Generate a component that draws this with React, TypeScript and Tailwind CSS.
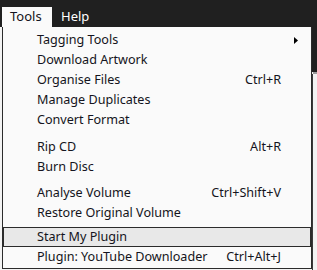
import React from "react";

type Item = { label: string; shortcut?: string; submenu?: boolean; active?: boolean } | { sep: number };

const items: Item[] = [
  { label: "Tagging Tools", submenu: true },
  { label: "Download Artwork" },
  { label: "Organise Files", shortcut: "Ctrl+R" },
  { label: "Manage Duplicates" },
  { label: "Convert Format" },
  { sep: 7 },
  { label: "Rip CD", shortcut: "Alt+R" },
  { label: "Burn Disc" },
  { sep: 6 },
  { label: "Analyse Volume", shortcut: "Ctrl+Shift+V" },
  { label: "Restore Original Volume" },
  { sep: 4 },
  { label: "Start My Plugin", active: true },
  { label: "Plugin: YouTube Downloader", shortcut: "Ctrl+Alt+J" },
];

function MenuRow({ item }: { item: { label: string; shortcut?: string; submenu?: boolean; active?: boolean } }) {
  return (
    <div
      className={
        "flex items-center h-[20px] " +
        (item.active
          ? "bg-[#e8e8e8] border border-[#2b2b2b] pl-[33px] pr-[29px]"
          : "pl-[34px] pr-[30px]")
      }
    >
      <span className="flex-1 whitespace-nowrap">{item.label}</span>
      {item.shortcut && <span className="whitespace-nowrap">{item.shortcut}</span>}
      {item.submenu && (
        <svg width="4" height="7" viewBox="0 0 4 7" className="mr-[-17px] ml-auto">
          <path d="M0 0 L4 3.5 L0 7 Z" fill="#000" />
        </svg>
      )}
    </div>
  );
}

export default function App() {
  return (
    <div
      className="relative flex flex-col w-[317px] h-[270px] overflow-hidden bg-[#f3f3f3] text-[12.6px] text-[#141420]"
      style={{ fontFamily: '"Noto Sans", "Open Sans", sans-serif' }}
    >
      {/* Menu bar */}
      <div className="flex items-end h-[27px] shrink-0 bg-[#202020]">
        <div className="ml-[2px] h-[20px] w-[50px] bg-[#fafafa] pl-[8px] leading-[18px] text-[13px]">
          Tools
        </div>
        <div className="ml-[9px] h-[20px] leading-[18px] text-[13px] text-white">Help</div>
      </div>

      {/* Window content behind the menu */}
      <div className="flex flex-1">
        <div className="flex-1" />
        <div className="flex flex-col w-[6px]">
          <div className="h-[45px] bg-[#202020]" />
          <div className="h-[2px] ml-[2px] bg-[#9a9a9a]" />
          <div className="flex-1 ml-[1px] border-l border-[#3a3a3a]" />
        </div>
      </div>

      {/* Dropdown */}
      <div className="absolute left-[2px] top-[27px] w-[310px] h-[242px] bg-[#fafafa] border-x border-b border-[#2b2b2b] pt-[3px]">
        {items.map((item, i) =>
          "sep" in item ? (
            <div key={i} style={{ height: item.sep }} />
          ) : (
            <MenuRow key={i} item={item} />
          )
        )}
      </div>
    </div>
  );
}
